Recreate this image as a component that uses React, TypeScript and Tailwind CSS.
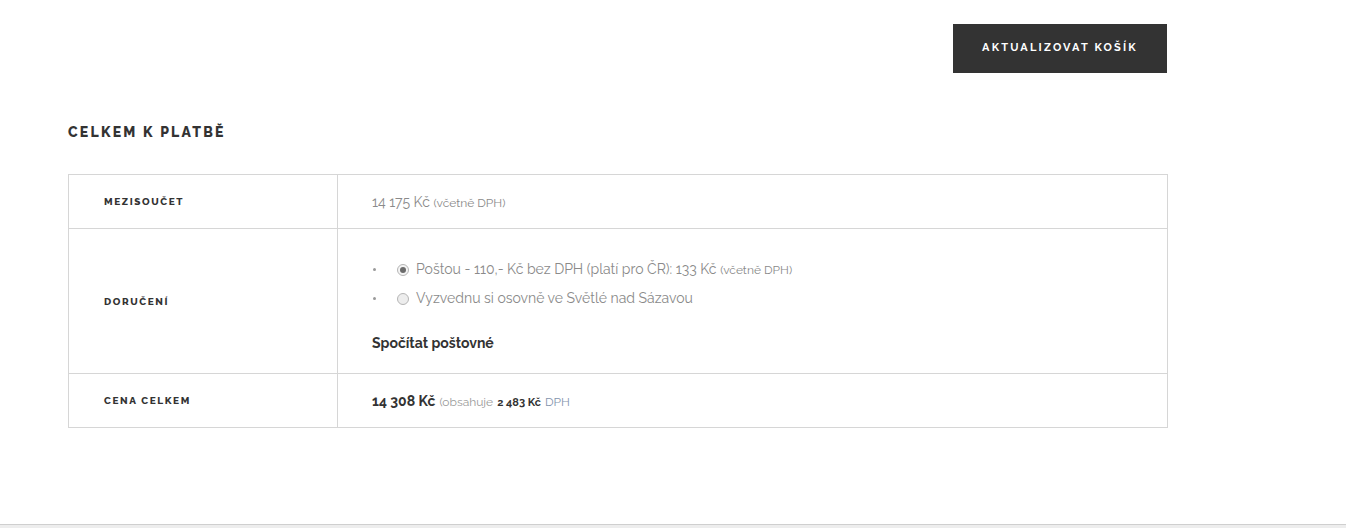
import React from 'react';

const font = { fontFamily: 'Raleway, Lato, "Open Sans", sans-serif' };

const Label: React.FC<{ children: React.ReactNode }> = ({ children }) => (
  <th className="w-[269px] border-r border-[#d6d6d6] pl-[35px] text-left align-middle text-[10px] font-extrabold uppercase tracking-[0.16em] text-[#333]">
    {children}
  </th>
);

export default function App() {
  return (
    <div className="relative h-[528px] w-full overflow-hidden bg-white" style={font}>
      <div className="ml-[68px] w-[1100px] pt-[24px]">
        <div className="flex justify-end pr-px">
          <button className="h-[49px] w-[214px] bg-[#333] text-[11px] font-bold uppercase tracking-[0.2em] text-white">
            Aktualizovat košík
          </button>
        </div>

        <h2 className="mt-[50px] text-[14px] font-extrabold uppercase leading-[18px] tracking-[0.16em] text-[#333]">
          Celkem k platbě
        </h2>

        <table className="mt-[33px] w-full border-collapse border border-[#d6d6d6]">
          <tbody>
            <tr className="h-[54px] border-b border-[#d6d6d6]">
              <Label>Mezisoučet</Label>
              <td className="pl-[34px] pt-px text-[14px] text-[#8a8a8a]">
                14 175 Kč <span className="text-[12px]">(včetně DPH)</span>
              </td>
            </tr>
            <tr className="h-[145px] border-b border-[#d6d6d6]">
              <Label>Doručení</Label>
              <td className="pl-[34px] align-top">
                <ul className="mt-[26px] text-[14px] text-[#8a8a8a]">
                  <li className="flex h-[29px] items-center">
                    <span className="mr-[21px] ml-px h-[3px] w-[3px] rounded-full bg-[#9a9a9a]" />
                    <span className="mr-[7px] flex h-[12px] w-[12px] items-center justify-center rounded-full border border-[#b5b5b5] bg-[#f4f4f4]">
                      <span className="h-[6px] w-[6px] rounded-full bg-[#6b6b6b]" />
                    </span>
                    <span>
                      Poštou - 110,- Kč bez DPH (platí pro ČR): 133 Kč{' '}
                      <span className="text-[12px]">(včetně DPH)</span>
                    </span>
                  </li>
                  <li className="flex h-[29px] items-center">
                    <span className="mr-[21px] ml-px h-[3px] w-[3px] rounded-full bg-[#9a9a9a]" />
                    <span className="mr-[7px] h-[12px] w-[12px] rounded-full border border-[#b5b5b5] bg-[#ededed]" />
                    <span>Vyzvednu si osovně ve Světlé nad Sázavou</span>
                  </li>
                </ul>
                <div className="mt-[20px] text-[14px] font-bold text-[#333]">Spočítat poštovné</div>
              </td>
            </tr>
            <tr className="h-[54px]">
              <Label>Cena celkem</Label>
              <td className="pl-[34px] pt-px text-[#333]">
                <span className="text-[14px] font-bold">14 308 Kč</span>{' '}
                <span className="text-[12px] text-[#9a9a9a]">(obsahuje</span>{' '}
                <span className="text-[11px] font-bold">2 483 Kč</span>{' '}
                <span className="text-[12px] text-[#8394ad]">DPH</span>
              </td>
            </tr>
          </tbody>
        </table>
      </div>

      <div className="absolute bottom-0 left-0 h-[4px] w-full border-t border-[#cfcfcf] bg-[#ededed]" />
    </div>
  );
}
